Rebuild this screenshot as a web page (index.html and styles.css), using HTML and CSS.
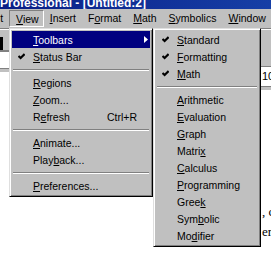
FILE: index.html
```html
<!DOCTYPE html>
<html lang="en">
<head>
    <meta charset="UTF-8">
    <title>Professional - [Untitled:2]</title>
    <link rel="stylesheet" href="styles.css">
</head>
<body>
<div class="app">
    <div class="titlebar">Professional - [Untitled:2]</div>

    <div class="menubar">
        <span class="mb-item"><u>E</u>dit</span>
        <span class="mb-item active"><u>V</u>iew</span>
        <span class="mb-item"><u>I</u>nsert</span>
        <span class="mb-item">F<u>o</u>rmat</span>
        <span class="mb-item"><u>M</u>ath</span>
        <span class="mb-item"><u>S</u>ymbolics</span>
        <span class="mb-item"><u>W</u>indow</span>
    </div>

    <!-- app behind the menus -->
    <div class="workarea">
        <div class="side side-left">
            <div class="toolbar"><span class="grip"></span></div>
            <div class="field"></div>
            <div class="band"></div>
        </div>
        <div class="doc"></div>
        <div class="side side-right">
            <div class="toolbar tall"></div>
            <div class="field size">10</div>
            <div class="band"></div>
            <p class="doc-line first">, c</p>
            <p class="doc-line">er:</p>
        </div>
    </div>

    <!-- View menu -->
    <div class="menu view-menu">
        <div class="row hot">
            <span class="mark"></span><span><u>T</u>oolbars</span>
            <svg class="arrow" width="4" height="7" viewBox="0 0 4 7"><polygon points="0,0 4,3.5 0,7"/></svg>
        </div>
        <div class="row">
            <span class="mark"><svg width="7" height="7" viewBox="0 0 7 7"><path d="M0.5 3 L2.6 5.1 L6.6 1.1"/></svg></span><span><u>S</u>tatus Bar</span>
        </div>
        <div class="sep"></div>
        <div class="row"><span class="mark"></span><span><u>R</u>egions</span></div>
        <div class="row"><span class="mark"></span><span><u>Z</u>oom...</span></div>
        <div class="row"><span class="mark"></span><span>R<u>e</u>fresh</span><span class="shortcut">Ctrl+R</span></div>
        <div class="sep"></div>
        <div class="row"><span class="mark"></span><span><u>A</u>nimate...</span></div>
        <div class="row"><span class="mark"></span><span>Play<u>b</u>ack...</span></div>
        <div class="sep"></div>
        <div class="row"><span class="mark"></span><span><u>P</u>references...</span></div>
    </div>

    <!-- Toolbars submenu -->
    <div class="menu sub-menu">
        <div class="row"><span class="mark"><svg width="7" height="7" viewBox="0 0 7 7"><path d="M0.5 3 L2.6 5.1 L6.6 1.1"/></svg></span><span><u>S</u>tandard</span></div>
        <div class="row"><span class="mark"><svg width="7" height="7" viewBox="0 0 7 7"><path d="M0.5 3 L2.6 5.1 L6.6 1.1"/></svg></span><span><u>F</u>ormatting</span></div>
        <div class="row"><span class="mark"><svg width="7" height="7" viewBox="0 0 7 7"><path d="M0.5 3 L2.6 5.1 L6.6 1.1"/></svg></span><span><u>M</u>ath</span></div>
        <div class="sep"></div>
        <div class="row"><span class="mark"></span><span><u>A</u>rithmetic</span></div>
        <div class="row"><span class="mark"></span><span><u>E</u>valuation</span></div>
        <div class="row"><span class="mark"></span><span><u>G</u>raph</span></div>
        <div class="row"><span class="mark"></span><span>Matri<u>x</u></span></div>
        <div class="row"><span class="mark"></span><span><u>C</u>alculus</span></div>
        <div class="row"><span class="mark"></span><span><u>P</u>rogramming</span></div>
        <div class="row"><span class="mark"></span><span>Gree<u>k</u></span></div>
        <div class="row"><span class="mark"></span><span>Sym<u>b</u>olic</span></div>
        <div class="row"><span class="mark"></span><span>Mo<u>d</u>ifier</span></div>
    </div>
</div>
</body>
</html>
```

FILE: styles.css
```css
* { box-sizing: border-box; }
body { margin: 0; background: #fff; font-family: "Liberation Sans", Arial, sans-serif; font-size: 10.5px; color: #000; overflow: hidden; }
.app { position: relative; width: 271px; height: 263px; overflow: hidden; }

/* title + menu bar */
.titlebar { height: 9px; background: linear-gradient(to right, #0a1e86, #163fa6); color: #fff; font-weight: bold; font-size: 12px; line-height: 6px; white-space: nowrap; overflow: hidden; }
.menubar { display: flex; align-items: center; height: 19px; margin-left: -21px; background: #c0c0c0; white-space: nowrap; }
.mb-item { padding: 0 5px; border: 1px solid transparent; line-height: 15px; }
.mb-item.active { border-color: #808080 #fff #fff #808080; padding: 1px 4px 0 6px; line-height: 14px; }

/* background window */
.workarea { display: flex; height: 235px; }
.side { overflow: hidden; white-space: nowrap; }
.side-left { width: 9px; }
.side-right { width: 10px; }
.doc { flex: 1; }
.toolbar { height: 22px; background: #c0c0c0; border-top: 1px solid #808080; box-shadow: inset 0 1px #fff; padding-top: 8px; }
.toolbar.tall { height: 38px; }
.grip { display: block; width: 3px; height: 13px; background: #000; }
.field { height: 18px; background: #fff; border-top: 2px solid #808080; }
.field.size { height: 20px; border-top-width: 1px; font-size: 11px; line-height: 18px; padding-left: 1px; }
.band { height: 4px; background: #c0c0c0; border-top: 1px solid #808080; }
.doc-line { margin: 0; padding-left: 1px; font-family: "Liberation Serif", "Times New Roman", serif; font-size: 13px; line-height: 20px; }
.doc-line.first { margin-top: 112px; }

/* menus */
.menu { position: absolute; top: 28px; background: #c0c0c0; border: 1px solid; border-color: #dfdfdf #000 #000 #dfdfdf; box-shadow: inset 1px 1px #fff, inset -1px -1px #808080; padding: 2px; }
.view-menu { left: 9px; width: 144px; }
.sub-menu { left: 153px; width: 108px; }
.row { display: flex; align-items: center; height: 17px; white-space: nowrap; }
.row.hot { background: #000080; color: #fff; }
.mark { display: flex; align-items: center; width: 21px; padding-left: 6px; flex: none; }
.mark path { fill: none; stroke: #000; stroke-width: 2.1; }
.arrow { margin-left: auto; margin-right: 2px; fill: #fff; }
.shortcut { margin-left: auto; margin-right: 13px; }
.sep { height: 2px; margin: 4px 1px 3px; border-top: 1px solid #808080; border-bottom: 1px solid #fff; }
```
